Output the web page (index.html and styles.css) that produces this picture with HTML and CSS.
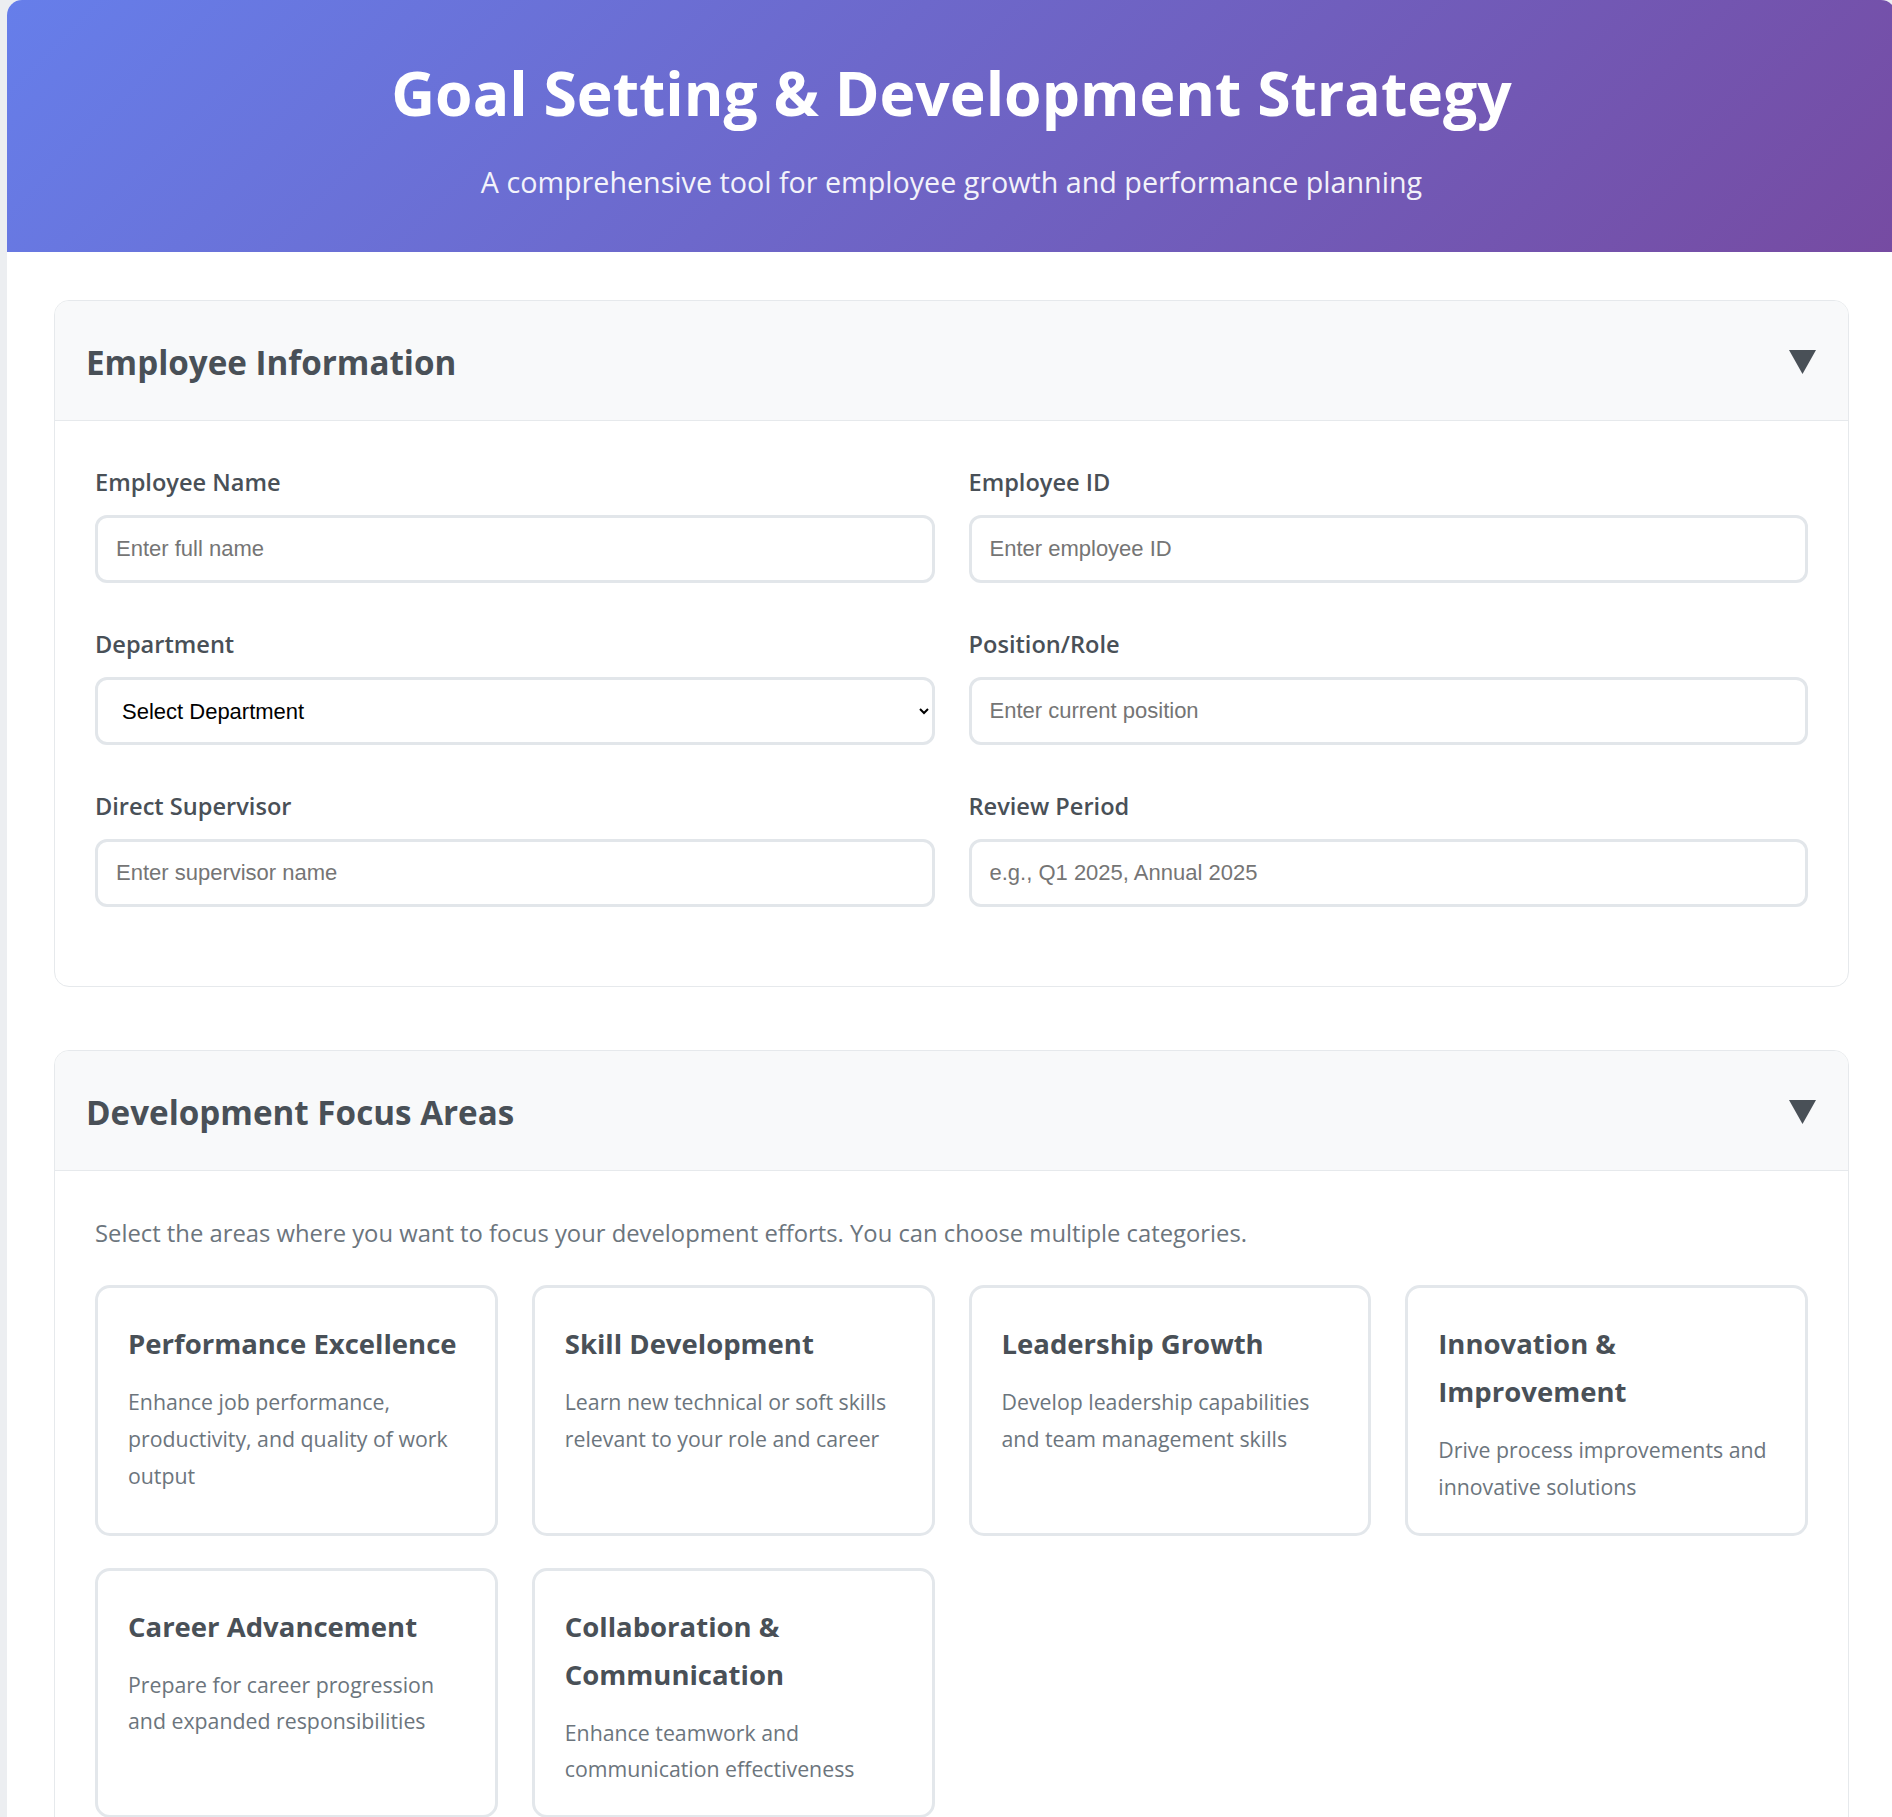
FILE: index.html
```html
<!DOCTYPE html>
<html>
<head>
  <meta charset="utf-8">
  <title>Goal Setting &amp; Development Strategy</title>
  <link rel="stylesheet" href="styles.css">
</head>
<body>
  <div class="container">
    <header class="page-header">
      <h1>Goal Setting &amp; Development Strategy</h1>
      <p>A comprehensive tool for employee growth and performance planning</p>
    </header>

    <main class="content">
      <section class="section">
        <div class="section-header">
          <h2>Employee Information</h2>
          <svg class="toggle" width="27" height="24" viewBox="0 0 27 24"><polygon points="0,0 27,0 13.5,24"/></svg>
        </div>
        <div class="section-body">
          <div class="form-grid">
            <div class="form-group">
              <label for="empName">Employee Name</label>
              <input type="text" id="empName" placeholder="Enter full name">
            </div>
            <div class="form-group">
              <label for="empId">Employee ID</label>
              <input type="text" id="empId" placeholder="Enter employee ID">
            </div>
            <div class="form-group">
              <label for="department">Department</label>
              <select id="department">
                <option value="">Select Department</option>
                <option>Engineering</option>
                <option>Sales</option>
                <option>Marketing</option>
                <option>Human Resources</option>
                <option>Finance</option>
                <option>Operations</option>
              </select>
            </div>
            <div class="form-group">
              <label for="position">Position/Role</label>
              <input type="text" id="position" placeholder="Enter current position">
            </div>
            <div class="form-group">
              <label for="supervisor">Direct Supervisor</label>
              <input type="text" id="supervisor" placeholder="Enter supervisor name">
            </div>
            <div class="form-group">
              <label for="period">Review Period</label>
              <input type="text" id="period" placeholder="e.g., Q1 2025, Annual 2025">
            </div>
          </div>
        </div>
      </section>

      <section class="section">
        <div class="section-header">
          <h2>Development Focus Areas</h2>
          <svg class="toggle" width="27" height="24" viewBox="0 0 27 24"><polygon points="0,0 27,0 13.5,24"/></svg>
        </div>
        <div class="section-body">
          <p class="intro">Select the areas where you want to focus your development efforts. You can choose multiple categories.</p>
          <div class="focus-grid">
            <div class="focus-card">
              <h3>Performance Excellence</h3>
              <p>Enhance job performance, productivity, and quality of work output</p>
            </div>
            <div class="focus-card">
              <h3>Skill Development</h3>
              <p>Learn new technical or soft skills relevant to your role and career</p>
            </div>
            <div class="focus-card">
              <h3>Leadership Growth</h3>
              <p>Develop leadership capabilities and team management skills</p>
            </div>
            <div class="focus-card">
              <h3>Innovation &amp; Improvement</h3>
              <p>Drive process improvements and innovative solutions</p>
            </div>
            <div class="focus-card">
              <h3>Career Advancement</h3>
              <p>Prepare for career progression and expanded responsibilities</p>
            </div>
            <div class="focus-card">
              <h3>Collaboration &amp; Communication</h3>
              <p>Enhance teamwork and communication effectiveness</p>
            </div>
          </div>
        </div>
      </section>
    </main>
  </div>

  <script>
    document.querySelectorAll('.section-header').forEach(header => {
      header.addEventListener('click', () => {
        header.parentElement.classList.toggle('collapsed');
      });
    });
    document.querySelectorAll('.focus-card').forEach(card => {
      card.addEventListener('click', () => card.classList.toggle('selected'));
    });
  </script>
</body>
</html>
```

FILE: styles.css
```css
html {
  scrollbar-width: none;
}
body {
  margin: 0;
  padding: 0 0 0 7px;
  background-color: #eceef1;
  font-family: "Segoe UI", "Open Sans", sans-serif;
  color: #495057;
}
.container {
  width: 1889px;
  background: #fff;
  border-radius: 15px 15px 0 0;
  overflow: hidden;
}
.page-header {
  background: linear-gradient(135deg, #667eea 0%, #764ba2 100%);
  color: white;
  text-align: center;
  padding: 53px 20px 50px;
}
.page-header h1 {
  margin: 0;
  font-size: 60.6px;
  line-height: 80px;
  font-weight: 700;
}
.page-header p {
  margin: 29px 0 0;
  font-size: 28.7px;
  line-height: 40px;
  opacity: 0.92;
}
.content {
  padding: 48px 47px 60px;
}
.section {
  border: 1px solid #e6e9ec;
  border-radius: 15px;
  margin-bottom: 63px;
  overflow: hidden;
}
.section-header {
  display: flex;
  justify-content: space-between;
  align-items: center;
  background-color: #f8f9fa;
  border-bottom: 1px solid #e6e9ec;
  padding: 40px 32px 35px 31px;
  cursor: pointer;
}
.section-header h2 {
  margin: 0;
  font-size: 33.2px;
  line-height: 44px;
  font-weight: 700;
  color: #495057;
}
.toggle {
  fill: #495057;
  margin-top: -2px;
}
.section.collapsed .section-body {
  display: none;
}
.section-body {
  padding: 41px 40px 34px;
}
.form-grid {
  display: grid;
  grid-template-columns: 1fr 1fr;
  column-gap: 34px;
  margin-top: 4px;
}
.form-group {
  margin-bottom: 45px;
}
.form-group label {
  display: block;
  font-size: 23.6px;
  line-height: 32px;
  font-weight: 600;
  margin-bottom: 17px;
}
.form-group input,
.form-group select {
  display: block;
  width: 100%;
  height: 68px;
  box-sizing: border-box;
  padding: 0 18px;
  border: 3px solid #e2e6ea;
  border-radius: 12px;
  background: #fff;
  font-family: "Liberation Sans", Arial, sans-serif;
  font-size: 22px;
  color: #000;
}
.form-group select {
  padding-left: 20px;
}
.form-group input::placeholder {
  color: #757575;
}
.intro {
  margin: 2px 0 33px;
  font-size: 23.8px;
  line-height: 38px;
  color: #6c757d;
}
.focus-grid {
  display: grid;
  grid-template-columns: repeat(4, 1fr);
  column-gap: 34px;
  row-gap: 32px;
}
.focus-card {
  border: 3px solid #e3e7eb;
  border-radius: 15px;
  padding: 32px 30px 27px;
  cursor: pointer;
}
.focus-card.selected {
  border-color: #667eea;
  background-color: #f3f4fe;
}
.focus-card h3 {
  margin: 0 0 16px;
  font-size: 27.5px;
  line-height: 48px;
  font-weight: 700;
  color: #495057;
}
.focus-card p {
  margin: 0;
  font-size: 21.3px;
  line-height: 36.8px;
  color: #6c757d;
}
```
